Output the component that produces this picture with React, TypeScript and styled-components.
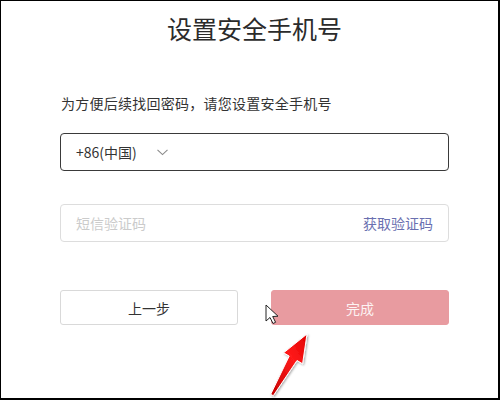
import React from "react";
import { createGlobalStyle, styled } from "styled-components";

const GlobalStyle = createGlobalStyle`
  html, body {
    margin: 0;
    padding: 0;
    background: #ffffff;
  }
  body {
    font-family: "Noto Sans CJK SC", "Noto Sans", "Liberation Sans", sans-serif;
    color: #333333;
  }
`;

const Frame = styled.div`
  position: relative;
  box-sizing: border-box;
  width: 500px;
  height: 400px;
  border-style: solid;
  border-color: #000000;
  border-width: 1px 2px 2px 1px;
  background: #ffffff;
  overflow: hidden;
`;

const Content = styled.div`
  width: 389px;
  margin-left: 59px;
  padding-top: 14px;
  display: flex;
  flex-direction: column;
`;

const Title = styled.h1`
  margin: 0;
  font-size: 25px;
  line-height: 26px;
  font-weight: 400;
  text-align: center;
  color: #2b2b2b;
`;

const Hint = styled.p`
  margin: 52px 0 0 1px;
  font-size: 14px;
  line-height: 20px;
  letter-spacing: 0.25px;
  color: #333333;
`;

const Field = styled.div<{ $active?: boolean; $gap: number }>`
  box-sizing: border-box;
  margin-top: ${(p) => p.$gap}px;
  height: 38px;
  padding: 0 15px;
  display: flex;
  align-items: center;
  justify-content: space-between;
  border: 1px solid ${(p) => (p.$active ? "#3a3a3a" : "#dddddd")};
  border-radius: 4px;
  font-size: 14px;
`;

const Country = styled.div`
  display: flex;
  align-items: center;
  gap: 20px;
  color: #333333;
`;

const Placeholder = styled.span`
  color: #cbcbcb;
  font-size: 14px;
`;

const CodeLink = styled.span`
  color: #6a70b0;
  font-size: 14px;
  cursor: pointer;
`;

const Actions = styled.div`
  margin-top: 48px;
  display: grid;
  grid-template-columns: 178px 178px;
  justify-content: space-between;
`;

const Button = styled.button<{ $primary?: boolean }>`
  box-sizing: border-box;
  height: 35px;
  border-radius: 3px;
  font-family: inherit;
  font-size: 14px;
  border: 1px solid ${(p) => (p.$primary ? "#e89ba0" : "#d9d9d9")};
  background: ${(p) => (p.$primary ? "#e89ba0" : "#ffffff")};
  color: ${(p) => (p.$primary ? "#fdf3f3" : "#333333")};
`;

const Overlay = styled.svg`
  position: absolute;
  left: -1px;
  top: -1px;
  width: 500px;
  height: 400px;
  pointer-events: none;
`;

const Chevron = () => (
  <svg width="11" height="7" viewBox="0 0 11 7">
    <polyline
      points="0.5,0.8 5.5,5.6 10.5,0.8"
      fill="none"
      stroke="#8a8a8a"
      strokeWidth="1.1"
    />
  </svg>
);

export default function App() {
  return (
    <>
      <GlobalStyle />
      <Frame>
        <Content>
          <Title>设置安全手机号</Title>
          <Hint>为方便后续找回密码，请您设置安全手机号</Hint>
          <Field $active $gap={20}>
            <Country>
              <span>+86(中国)</span>
              <Chevron />
            </Country>
          </Field>
          <Field $gap={33}>
            <Placeholder>短信验证码</Placeholder>
            <CodeLink>获取验证码</CodeLink>
          </Field>
          <Actions>
            <Button>上一步</Button>
            <Button $primary>完成</Button>
          </Actions>
        </Content>
        <Overlay viewBox="0 0 500 400">
          <defs>
            <linearGradient id="redArrow" x1="0" y1="1" x2="1" y2="0">
              <stop offset="0" stopColor="#c40000" />
              <stop offset="0.6" stopColor="#ff1a1a" />
              <stop offset="1" stopColor="#e00000" />
            </linearGradient>
            <filter id="soft" x="-30%" y="-30%" width="160%" height="160%">
              <feDropShadow dx="1" dy="1" stdDeviation="1.2" floodColor="#000" floodOpacity="0.35" />
            </filter>
          </defs>
          {/* mouse pointer */}
          <path
            d="M266 305 L266 321 L270 317.5 L273 323.5 L275.6 322.3 L272.7 316.5 L278 316.2 Z"
            fill="#ffffff"
            stroke="#222222"
            strokeWidth="1"
            strokeLinejoin="round"
          />
          {/* annotation arrow */}
          <polygon
            points="307,334 302.6,363.8 297,360.5 273.3,395.7 270.7,394.3 289.2,356.1 283.6,352.8"
            fill="url(#redArrow)"
            stroke="#ffffff"
            strokeWidth="1"
            strokeLinejoin="round"
            filter="url(#soft)"
          />
        </Overlay>
      </Frame>
    </>
  );
}
